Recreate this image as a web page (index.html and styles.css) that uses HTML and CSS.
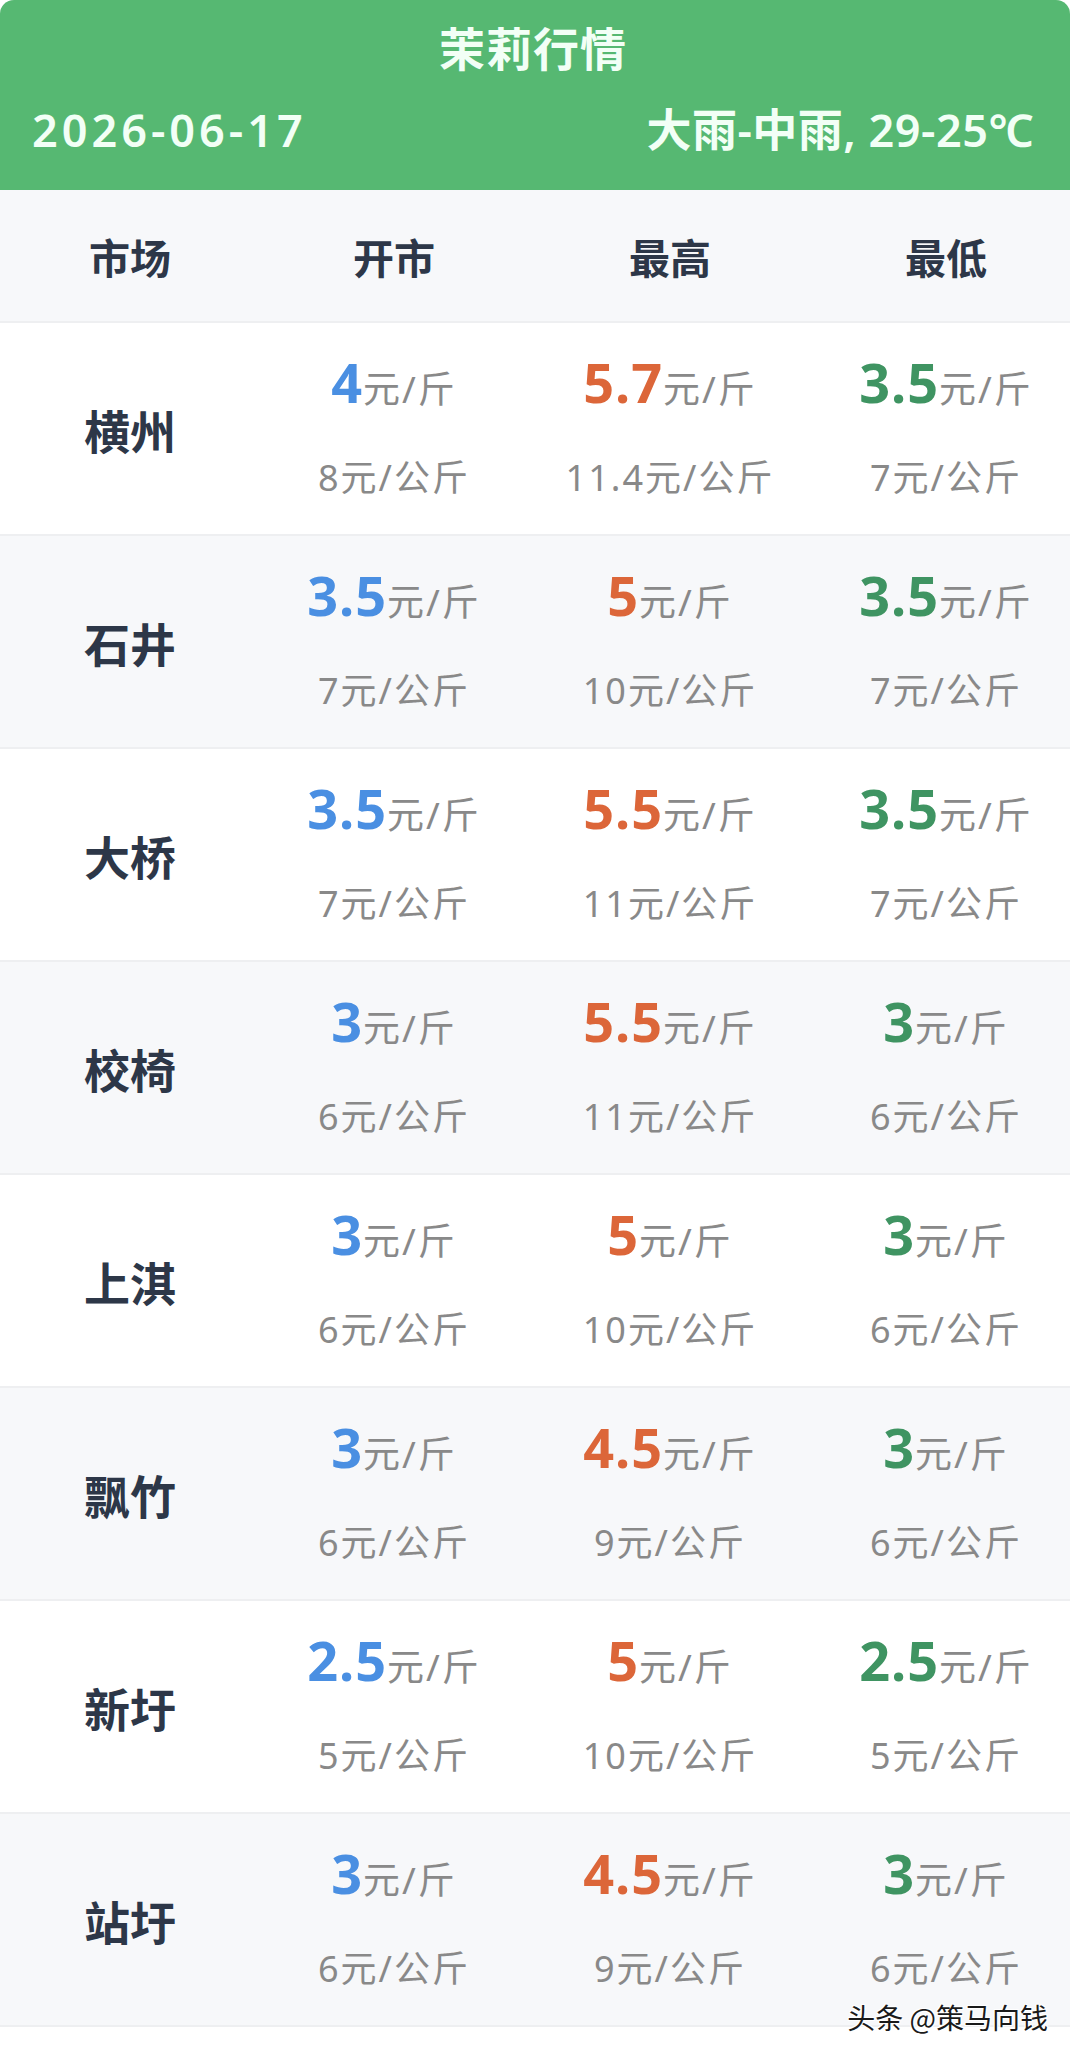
FILE: index.html
```html
<!DOCTYPE html>
<html lang="zh-CN">
<head>
  <meta charset="UTF-8" />
  <meta name="viewport" content="width=device-width, initial-scale=1.0" />
  <title>茉莉行情</title>
  <link rel="stylesheet" href="styles.css">
</head>
<body>
  <div class="card">
    <header class="top">
      <h1 class="title">茉莉行情</h1>
      <div class="meta">
        <span class="date">2026-06-17</span>
        <span class="weather">大雨-中雨, 29-25℃</span>
      </div>
    </header>

    <div class="table">
      <div class="row head">
        <div class="cell market">市场</div>
        <div class="cell">开市</div>
        <div class="cell">最高</div>
        <div class="cell">最低</div>
      </div>

      <div class="row">
        <div class="cell market">横州</div>
        <div class="cell price"><p class="jin"><b class="open">4</b>元/斤</p><p class="kg">8元/公斤</p></div>
        <div class="cell price"><p class="jin"><b class="high">5.7</b>元/斤</p><p class="kg">11.4元/公斤</p></div>
        <div class="cell price"><p class="jin"><b class="low">3.5</b>元/斤</p><p class="kg">7元/公斤</p></div>
      </div>

      <div class="row alt">
        <div class="cell market">石井</div>
        <div class="cell price"><p class="jin"><b class="open">3.5</b>元/斤</p><p class="kg">7元/公斤</p></div>
        <div class="cell price"><p class="jin"><b class="high">5</b>元/斤</p><p class="kg">10元/公斤</p></div>
        <div class="cell price"><p class="jin"><b class="low">3.5</b>元/斤</p><p class="kg">7元/公斤</p></div>
      </div>

      <div class="row">
        <div class="cell market">大桥</div>
        <div class="cell price"><p class="jin"><b class="open">3.5</b>元/斤</p><p class="kg">7元/公斤</p></div>
        <div class="cell price"><p class="jin"><b class="high">5.5</b>元/斤</p><p class="kg">11元/公斤</p></div>
        <div class="cell price"><p class="jin"><b class="low">3.5</b>元/斤</p><p class="kg">7元/公斤</p></div>
      </div>

      <div class="row alt">
        <div class="cell market">校椅</div>
        <div class="cell price"><p class="jin"><b class="open">3</b>元/斤</p><p class="kg">6元/公斤</p></div>
        <div class="cell price"><p class="jin"><b class="high">5.5</b>元/斤</p><p class="kg">11元/公斤</p></div>
        <div class="cell price"><p class="jin"><b class="low">3</b>元/斤</p><p class="kg">6元/公斤</p></div>
      </div>

      <div class="row">
        <div class="cell market">上淇</div>
        <div class="cell price"><p class="jin"><b class="open">3</b>元/斤</p><p class="kg">6元/公斤</p></div>
        <div class="cell price"><p class="jin"><b class="high">5</b>元/斤</p><p class="kg">10元/公斤</p></div>
        <div class="cell price"><p class="jin"><b class="low">3</b>元/斤</p><p class="kg">6元/公斤</p></div>
      </div>

      <div class="row alt">
        <div class="cell market">飘竹</div>
        <div class="cell price"><p class="jin"><b class="open">3</b>元/斤</p><p class="kg">6元/公斤</p></div>
        <div class="cell price"><p class="jin"><b class="high">4.5</b>元/斤</p><p class="kg">9元/公斤</p></div>
        <div class="cell price"><p class="jin"><b class="low">3</b>元/斤</p><p class="kg">6元/公斤</p></div>
      </div>

      <div class="row">
        <div class="cell market">新圩</div>
        <div class="cell price"><p class="jin"><b class="open">2.5</b>元/斤</p><p class="kg">5元/公斤</p></div>
        <div class="cell price"><p class="jin"><b class="high">5</b>元/斤</p><p class="kg">10元/公斤</p></div>
        <div class="cell price"><p class="jin"><b class="low">2.5</b>元/斤</p><p class="kg">5元/公斤</p></div>
      </div>

      <div class="row alt">
        <div class="cell market">站圩</div>
        <div class="cell price"><p class="jin"><b class="open">3</b>元/斤</p><p class="kg">6元/公斤</p></div>
        <div class="cell price"><p class="jin"><b class="high">4.5</b>元/斤</p><p class="kg">9元/公斤</p></div>
        <div class="cell price"><p class="jin"><b class="low">3</b>元/斤</p><p class="kg">6元/公斤</p></div>
      </div>
    </div>

    <div class="mark">头条 @策马向钱</div>
  </div>
</body>
</html>
```

FILE: styles.css
```css
html, body {
  margin: 0;
  padding: 0;
  background: white;
}

body {
  font-family: "Noto Sans", "Noto Sans CJK SC", sans-serif;
  color: #2d3748;
}

.card {
  position: relative;
  width: 1070px;
  min-height: 2054px;
  overflow: hidden;
}

/* green top bar */
.top {
  background: #56b872;
  color: #f2fff6;
  border-radius: 14px 14px 0 0;
  padding: 20px 36px 32px 32px;
  height: 190px;
  box-sizing: border-box;
}

.title {
  margin: 0;
  text-align: center;
  font-size: 46px;
  line-height: 56px;
  font-weight: 600;
  letter-spacing: 1px;
}

.meta {
  margin-top: 26px;
  display: flex;
  justify-content: space-between;
  align-items: center;
  font-size: 45px;
  line-height: 56px;
  font-weight: 600;
}

.date {
  letter-spacing: 4px;
}

.weather {
  letter-spacing: 0.5px;
}

/* table */
.table {
  width: 1084px;
}

.row {
  display: grid;
  grid-template-columns: 256px 276px 276px 276px;
  height: 213px;
  background: white;
  border-bottom: 2px solid #eeeff1;
  box-sizing: border-box;
}

.row.alt,
.row.head {
  background: #f7f8fa;
}

.row.head {
  height: 133px;
}

.cell {
  display: flex;
  flex-direction: column;
  justify-content: center;
  align-items: center;
  font-size: 41px;
  font-weight: 700;
}

.cell.market {
  padding-left: 4px;
}

.row:not(.head) .market {
  font-size: 46px;
}

.cell.price {
  padding-bottom: 6px;
}

.price p {
  margin: 0;
  white-space: nowrap;
}

.price .jin {
  font-size: 37px;
  line-height: 64px;
  font-weight: 400;
  color: #898989;
  letter-spacing: 2px;
}

.jin b {
  font-size: 54px;
  font-weight: 700;
  letter-spacing: 1px;
}

.price .kg {
  margin-top: 33px;
  font-size: 36px;
  line-height: 48px;
  font-weight: 400;
  color: #898989;
  letter-spacing: 2px;
}

.open { color: #4a8fe2; }
.high { color: #dc6639; }
.low  { color: #3f9462; }

/* watermark */
.mark {
  position: absolute;
  right: 22px;
  top: 1999px;
  font-size: 28px;
  line-height: 36px;
  font-family: "Noto Sans CJK SC", sans-serif;
  color: #1a1a1a;
  text-shadow: 1px 1px 0 white, -1px -1px 0 white, 1px -1px 0 white, -1px 1px 0 white;
}
```
